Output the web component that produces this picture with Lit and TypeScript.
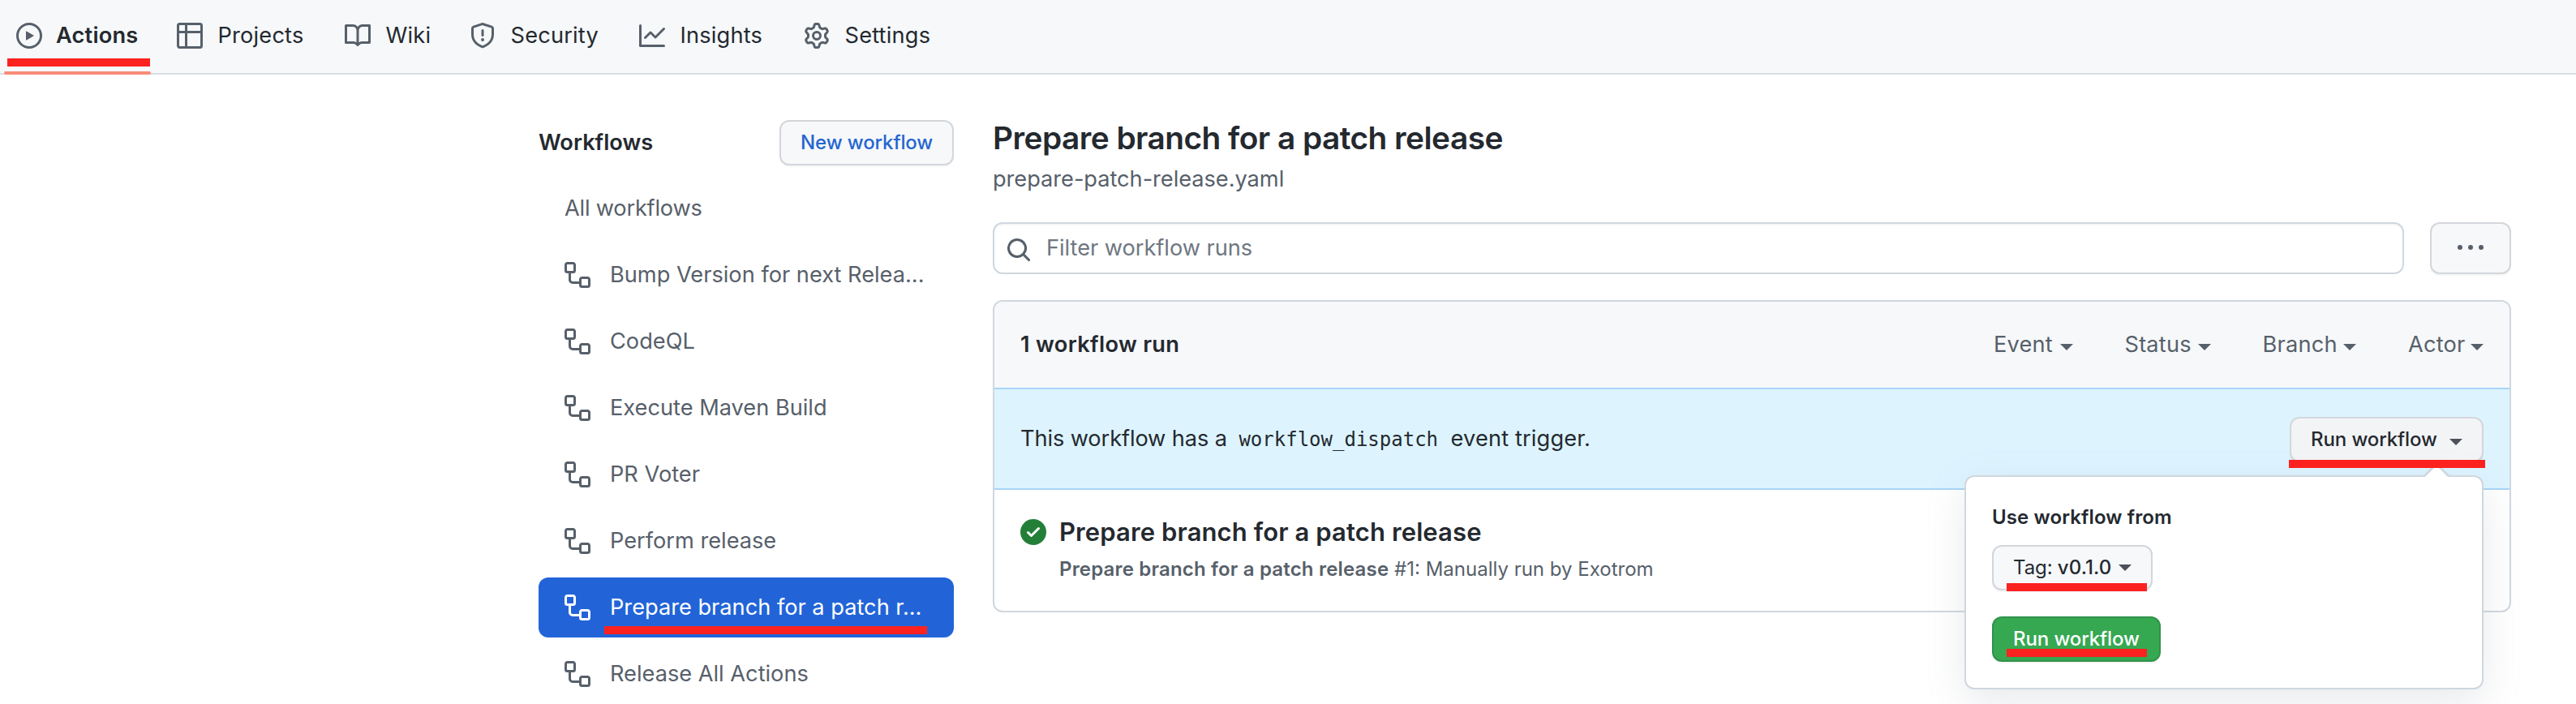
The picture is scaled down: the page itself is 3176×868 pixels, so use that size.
import { LitElement, html, css, nothing } from "lit";
import { customElement, property } from "lit/decorators.js";
import { classMap } from "lit/directives/class-map.js";
import { styleMap } from "lit/directives/style-map.js";

const ICONS: Record<string, string> = {
  play: "M1.5 8a6.5 6.5 0 1113 0 6.5 6.5 0 01-13 0zM8 0a8 8 0 100 16A8 8 0 008 0zM6.379 5.227A.25.25 0 006 5.442v5.117a.25.25 0 00.379.214l4.264-2.559a.25.25 0 000-.428L6.379 5.227z",
  table: "M1.75 0A1.75 1.75 0 000 1.75v12.5C0 15.216.784 16 1.75 16h12.5A1.75 1.75 0 0016 14.25V1.75A1.75 1.75 0 0014.25 0H1.75zM1.5 1.75a.25.25 0 01.25-.25H5V5H1.5V1.75zM6.5 1.5V5h8V1.75a.25.25 0 00-.25-.25H6.5zM14.5 6.5h-8v8h7.75a.25.25 0 00.25-.25V6.5zM5 14.5v-8H1.5v7.75c0 .138.112.25.25.25H5z",
  book: "M0 1.75A.75.75 0 01.75 1h4.253c1.227 0 2.317.59 3 1.501A3.744 3.744 0 0111.006 1h4.245a.75.75 0 01.75.75v10.5a.75.75 0 01-.75.75h-4.507a2.25 2.25 0 00-1.591.659l-.622.621a.75.75 0 01-1.06 0l-.622-.621A2.25 2.25 0 005.258 13H.75a.75.75 0 01-.75-.75V1.75zm8.755 3a2.25 2.25 0 012.25-2.25H14.5v9h-3.757c-.71 0-1.4.201-1.992.572l.004-7.322zm-1.504 7.324l.004-5.073-.002-2.253A2.25 2.25 0 005.003 2.5H1.5v9h3.757a3.75 3.75 0 011.994.574z",
  shield: "M7.467.133a1.75 1.75 0 011.066 0l5.25 1.68A1.75 1.75 0 0115 3.48V7c0 1.566-.32 3.182-1.303 4.682-.983 1.498-2.585 2.813-5.032 3.855a1.7 1.7 0 01-1.33 0c-2.447-1.042-4.049-2.357-5.032-3.855C1.32 10.182 1 8.566 1 7V3.48a1.755 1.755 0 011.217-1.667l5.25-1.68zm.61 1.429a.25.25 0 00-.153 0l-5.25 1.68a.25.25 0 00-.174.238V7c0 1.358.275 2.666 1.057 3.86.784 1.194 2.121 2.34 4.366 3.297a.2.2 0 00.154 0c2.245-.956 3.582-2.104 4.366-3.298C13.225 9.666 13.5 8.36 13.5 7V3.48a.251.251 0 00-.174-.237l-5.25-1.68zM8.75 4.75v3a.75.75 0 01-1.5 0v-3a.75.75 0 011.5 0zM9 10.5a1 1 0 11-2 0 1 1 0 012 0z",
  graph: "M1.5 1.75a.75.75 0 00-1.5 0v12.5c0 .414.336.75.75.75h14.5a.75.75 0 000-1.5H1.5V1.75zm14.28 2.53a.75.75 0 00-1.06-1.06L10 7.94 7.53 5.47a.75.75 0 00-1.06 0L3.22 8.72a.75.75 0 001.06 1.06L7 7.06l2.47 2.47a.75.75 0 001.06 0l5.25-5.25z",
  gear: "M7.429 1.525a6.593 6.593 0 011.142 0c.036.003.108.036.137.146l.289 1.105c.147.56.55.967.997 1.189.174.086.341.183.501.29.417.278.97.423 1.53.27l1.102-.303c.11-.03.175.016.195.046.219.31.41.641.573.989.014.031.022.11-.059.19l-.815.806c-.411.406-.562.957-.53 1.456a4.588 4.588 0 010 .582c-.032.499.119 1.05.53 1.456l.815.806c.08.08.073.159.059.19a6.494 6.494 0 01-.573.99c-.02.029-.086.074-.195.045l-1.103-.303c-.559-.153-1.112-.008-1.529.27-.16.107-.327.204-.5.29-.449.222-.851.628-.998 1.189l-.289 1.105c-.029.11-.101.143-.137.146a6.613 6.613 0 01-1.142 0c-.036-.003-.108-.037-.137-.146l-.289-1.105c-.147-.56-.55-.967-.997-1.189a4.502 4.502 0 01-.501-.29c-.417-.278-.97-.423-1.53-.27l-1.102.303c-.11.03-.175-.016-.195-.046a6.492 6.492 0 01-.573-.989c-.014-.031-.022-.11.059-.19l.815-.806c.411-.406.562-.957.53-1.456a4.587 4.587 0 010-.582c.032-.499-.119-1.05-.53-1.456l-.815-.806c-.08-.08-.073-.159-.059-.19a6.44 6.44 0 01.573-.99c.02-.029.086-.075.195-.045l1.103.303c.559.153 1.112.008 1.529-.27.16-.107.327-.204.5-.29.449-.222.851-.628.998-1.189l.289-1.105c.029-.11.101-.143.137-.146zM8 0c-.236 0-.47.01-.701.03-.743.065-1.29.615-1.458 1.261l-.29 1.106c-.017.066-.078.158-.211.224a5.994 5.994 0 00-.668.386c-.123.082-.233.09-.3.071L3.27 2.776c-.644-.177-1.392.02-1.82.63a7.977 7.977 0 00-.704 1.217c-.315.675-.111 1.422.363 1.891l.815.806c.05.048.098.147.088.294a6.084 6.084 0 000 .772c.01.147-.038.246-.088.294l-.815.806c-.474.469-.678 1.216-.363 1.891.2.428.436.835.704 1.218.428.609 1.176.806 1.82.63l1.103-.303c.066-.019.176-.011.299.071.213.143.436.272.668.386.133.066.194.158.212.224l.289 1.106c.169.646.715 1.196 1.458 1.26a8.094 8.094 0 001.402 0c.743-.064 1.29-.614 1.458-1.26l.29-1.106c.017-.066.078-.158.211-.224a5.98 5.98 0 00.668-.386c.123-.082.233-.09.3-.071l1.102.302c.644.177 1.392-.02 1.82-.63.268-.382.505-.789.704-1.217.315-.675.111-1.422-.364-1.891l-.814-.806c-.05-.048-.098-.147-.088-.294a6.1 6.1 0 000-.772c-.01-.147.039-.246.088-.294l.814-.806c.475-.469.679-1.216.364-1.891a7.992 7.992 0 00-.704-1.218c-.428-.609-1.176-.806-1.82-.63l-1.103.303c-.066.019-.176.011-.299-.071a5.991 5.991 0 00-.668-.386c-.133-.066-.194-.158-.212-.224L10.16 1.29C9.99.645 9.444.095 8.701.031A8.094 8.094 0 008 0zm1.5 8a1.5 1.5 0 11-3 0 1.5 1.5 0 013 0zM11 8a3 3 0 11-6 0 3 3 0 016 0z",
  workflow: "M0 1.75C0 .784.784 0 1.75 0h3.5C6.216 0 7 .784 7 1.75v3.5A1.75 1.75 0 015.25 7H4v4a1 1 0 001 1h4v-1.25C9 9.784 9.784 9 10.75 9h3.5c.966 0 1.75.784 1.75 1.75v3.5A1.75 1.75 0 0114.25 16h-3.5A1.75 1.75 0 019 14.25v-.75H5A2.5 2.5 0 012.5 11V7h-.75A1.75 1.75 0 010 5.25v-3.5zm1.75-.25a.25.25 0 00-.25.25v3.5c0 .138.112.25.25.25h3.5a.25.25 0 00.25-.25v-3.5a.25.25 0 00-.25-.25h-3.5zm9 9a.25.25 0 00-.25.25v3.5c0 .138.112.25.25.25h3.5a.25.25 0 00.25-.25v-3.5a.25.25 0 00-.25-.25h-3.5z",
  search: "M7 1a6 6 0 103.68 10.74l3.04 3.04a.75.75 0 101.06-1.06l-3.04-3.04A6 6 0 007 1zm0 1.5a4.5 4.5 0 110 9 4.5 4.5 0 010-9z",
  check: "M8 16A8 8 0 108 0a8 8 0 000 16zm3.78-9.72a.75.75 0 00-1.06-1.06L6.75 9.19 5.28 7.72a.75.75 0 00-1.06 1.06l2 2a.75.75 0 001.06 0l4.5-4.5z",
  kebab: "M8 9a1.5 1.5 0 100-3 1.5 1.5 0 000 3zM1.5 9a1.5 1.5 0 100-3 1.5 1.5 0 000 3zm13 0a1.5 1.5 0 100-3 1.5 1.5 0 000 3z",
};

@customElement("oct-icon")
class OctIcon extends LitElement {
  static styles = css`
    :host { display: block; flex: none; width: 32px; height: 32px; }
    svg { display: block; width: 32px; height: 32px; fill: currentColor; }
  `;
  @property() name = "";
  render() {
    return html`<svg viewBox="0 0 16 16"><path fill-rule="evenodd" d=${ICONS[this.name]}></path></svg>`;
  }
}

const TABS = [
  { icon: "play", label: "Actions", width: 101, selected: true },
  { icon: "table", label: "Projects", width: 108.5 },
  { icon: "book", label: "Wiki", width: 55.5 },
  { icon: "shield", label: "Security", width: 110.5 },
  { icon: "graph", label: "Insights", width: 104.5 },
  { icon: "gear", label: "Settings", width: 107 },
];

const WORKFLOWS = [
  { label: "Bump Version for next Relea..." },
  { label: "CodeQL" },
  { label: "Execute Maven Build" },
  { label: "PR Voter" },
  { label: "Perform release" },
  { label: "Prepare branch for a patch r...", selected: true },
  { label: "Release All Actions" },
];

const FILTERS = [
  { label: "Event", width: 81.5 },
  { label: "Status", width: 90 },
  { label: "Branch", width: 99.5 },
  { label: "Actor", width: 77 },
];

@customElement("app-root")
export class AppRoot extends LitElement {
  static styles = css`
    :host {
      display: block;
      height: 868px;
      overflow: hidden;
      background: #fff;
      color: #24292f;
      font-family: Inter, "Liberation Sans", sans-serif;
      font-size: 27.2px;
      line-height: 42px;
      white-space: nowrap;
    }
    * { box-sizing: border-box; }
    h1, h2, h3, p { margin: 0; font-weight: 600; }
    button { font: inherit; margin: 0; color: inherit; text-align: left; }

    .tabs {
      display: flex;
      gap: 16px;
      height: 92px;
      padding-left: 4px;
      background: #f6f8fa;
      border-bottom: 2px solid #d8dee6;
    }
    .tab {
      position: relative;
      display: flex;
      align-items: center;
      gap: 18.5px;
      height: 88px;
      padding: 0 16px;
    }
    .tab oct-icon { color: #57606a; }
    .tab-label { letter-spacing: 0.2px; }
    .tab.selected { font-weight: 600; gap: 17px; }
    .tab.selected::after {
      content: "";
      position: absolute;
      left: 1px;
      right: 0;
      top: 88px;
      height: 4px;
      border-radius: 2px;
      background: #f88c78;
    }

    .mark { position: absolute; height: 10px; background: #fc2220; }
    .mark-tab { left: 5px; right: 1px; top: 72px; }
    .mark-row { left: 81px; width: 398px; top: 60px; }
    .mark-run { left: -1px; right: -2px; top: 53px; }
    .mark-tag { left: 16px; width: 173px; top: 45px; }
    .mark-go { left: 16px; width: 173px; top: 38px; }

    .page { display: flex; gap: 48px; padding: 48px 80px 0 664px; }
    .side { flex: none; width: 512px; padding-top: 8px; }
    .side-head {
      display: flex;
      align-items: center;
      justify-content: space-between;
      height: 56px;
      margin-bottom: 16px;
    }
    .side-title { font-size: 27.2px; }
    .btn {
      position: relative;
      display: flex;
      align-items: center;
      height: 56px;
      padding: 0 24px;
      border: 2px solid #d3d6da;
      border-radius: 12px;
      background: #f6f8fa;
      box-shadow: 0 2px 0 rgba(27, 31, 36, 0.04);
      font-size: 24px;
      font-weight: 500;
      line-height: 40px;
      letter-spacing: -0.1px;
    }
    .btn-new { width: 215px; padding: 0 24px; color: #2465d0; }

    .row {
      position: relative;
      display: flex;
      align-items: center;
      gap: 24px;
      height: 74px;
      margin-bottom: 8px;
      padding: 0 32px;
      border-radius: 12px;
      color: #57606a;
    }
    .row.all { letter-spacing: -0.2px; }
    .row.selected { background: #2264d8; color: #fff; }

    .main { flex: 1; min-width: 0; }
    .title { font-size: 38.8px; line-height: 60px; letter-spacing: -0.53px; }
    .file { color: #57606a; font-weight: 400; letter-spacing: -0.03px; }
    .search-line { display: flex; gap: 32px; margin: 32px 0; }
    .search {
      flex: 1;
      display: flex;
      align-items: center;
      gap: 18px;
      height: 64px;
      padding-left: 14px;
      border: 2px solid #d0d7de;
      border-radius: 12px;
      color: #6e7781;
      box-shadow: inset 0 2px 0 rgba(208, 215, 222, 0.2);
      letter-spacing: -0.03px;
    }
    .search oct-icon { margin-top: 4px; color: #57606a; }
    .btn-more { width: 100px; height: 64px; padding: 0 32px; color: #57606a; }

    .runs { border: 2px solid #d0d7de; border-radius: 12px; height: 385px; }
    .runs-head {
      display: flex;
      align-items: center;
      justify-content: space-between;
      height: 106px;
      padding: 0 32px;
      border-radius: 10px 10px 0 0;
      background: #f6f8fa;
    }
    .count { font-size: 27.2px; letter-spacing: 0.34px; }
    .filters { display: flex; gap: 64px; color: #57606a; letter-spacing: 0.2px; }
    .filter { display: flex; align-items: center; }
    .caret {
      flex: none;
      width: 0;
      height: 0;
      margin-top: 5px;
      border: 8px solid transparent;
      border-top-color: currentColor;
      border-bottom-width: 0;
    }

    .banner {
      display: flex;
      align-items: center;
      justify-content: space-between;
      height: 126px;
      padding: 0 32px;
      border: solid #a8d5f8;
      border-width: 2px 0;
      background: #ddf4ff;
    }
    .banner-text { display: flex; align-items: baseline; letter-spacing: -0.1px; }
    .code {
      margin: 0 15.5px 0 14.5px;
      font-family: "DejaVu Sans Mono", monospace;
      font-size: 24px;
      letter-spacing: 0;
    }
    .trigger { letter-spacing: 0.15px; }
    .dispatch { position: relative; margin-top: 2px; }
    .btn-run { width: 239px; padding: 0 24px; justify-content: space-between; background: #f3f4f6; }
    .btn-run .caret, .btn-tag .caret { color: #4d5258; }

    .popover {
      position: absolute;
      top: 72px;
      right: 0;
      width: 640px;
      height: 264px;
      padding: 32px;
      border: 2px solid #d0d7de;
      border-radius: 12px;
      background: #fff;
      box-shadow: 0 16px 48px rgba(140, 149, 159, 0.2);
    }
    .popover::before, .popover::after {
      content: "";
      position: absolute;
      border: solid transparent;
      border-top-width: 0;
    }
    .popover::before {
      top: -18px;
      right: 40px;
      border-width: 0 16px 16px;
      border-bottom-color: #cfd8df;
    }
    .popover::after {
      top: -14px;
      right: 42px;
      border-width: 0 14px 14px;
      border-bottom-color: #fff;
    }
    .from { margin-bottom: 16px; font-size: 24px; line-height: 36px; letter-spacing: 0.13px; }
    .btn-tag { width: 198px; margin-bottom: 32px; }
    .tag-kind { width: 55px; font-weight: 400; }
    .tag-name { width: 75.5px; letter-spacing: 0.1px; }
    .btn-tag .caret { margin-top: 0; }
    .btn-go { width: 208px; border-color: #30924a; background: #36a852; color: #fff; }

    .run { display: flex; gap: 16px; padding: 32px 32px 0; }
    .run oct-icon { margin-top: 4px; color: #237f38; }
    .run-title { font-size: 31px; line-height: 40px; letter-spacing: 0.11px; }
    .run-info { padding-top: 8px; font-size: 24px; line-height: 36px; font-weight: 400; color: #57606a; }
    .run-name { font-weight: 600; letter-spacing: 0.18px; }
  `;

  render() {
    return html`
      <nav class="tabs">
        ${TABS.map((t) => html`
          <div class=${classMap({ tab: true, selected: !!t.selected })}>
            <oct-icon name=${t.icon}></oct-icon>
            <span class="tab-label" style=${styleMap({ width: `${t.width}px` })}>${t.label}</span>
            ${t.selected ? html`<i class="mark mark-tab"></i>` : nothing}
          </div>`)}
      </nav>
      <div class="page">
        <aside class="side">
          <div class="side-head">
            <h2 class="side-title">Workflows</h2>
            <button class="btn btn-new">New workflow</button>
          </div>
          <div class="row all">All workflows</div>
          ${WORKFLOWS.map((w) => html`
            <div class=${classMap({ row: true, selected: !!w.selected })}>
              <oct-icon name="workflow"></oct-icon>
              <span>${w.label}</span>
              ${w.selected ? html`<i class="mark mark-row"></i>` : nothing}
            </div>`)}
        </aside>
        <main class="main">
          <h1 class="title">Prepare branch for a patch release</h1>
          <p class="file">prepare-patch-release.yaml</p>
          <div class="search-line">
            <div class="search"><oct-icon name="search"></oct-icon><span>Filter workflow runs</span></div>
            <button class="btn btn-more"><oct-icon name="kebab"></oct-icon></button>
          </div>
          <section class="runs">
            <header class="runs-head">
              <h2 class="count">1 workflow run</h2>
              <div class="filters">
                ${FILTERS.map((f) => html`
                  <div class="filter">
                    <span style=${styleMap({ width: `${f.width}px` })}>${f.label}</span><i class="caret"></i>
                  </div>`)}
              </div>
            </header>
            <div class="banner">
              <div class="banner-text">
                <span>This workflow has a</span>
                <code class="code">workflow_dispatch</code>
                <span class="trigger">event trigger.</span>
              </div>
              <div class="dispatch">
                <button class="btn btn-run"><span>Run workflow</span><i class="caret"></i></button>
                <div class="popover">
                  <h3 class="from">Use workflow from</h3>
                  <button class="btn btn-tag">
                    <span class="tag-kind">Tag:</span><span class="tag-name">v0.1.0</span><i class="caret"></i>
                    <i class="mark mark-tag"></i>
                  </button>
                  <button class="btn btn-go">Run workflow<i class="mark mark-go"></i></button>
                </div>
                <i class="mark mark-run"></i>
              </div>
            </div>
            <div class="run">
              <oct-icon name="check"></oct-icon>
              <div>
                <h3 class="run-title">Prepare branch for a patch release</h3>
                <p class="run-info"><span class="run-name">Prepare branch for a patch release</span> #1: Manually run by Exotrom</p>
              </div>
            </div>
          </section>
        </main>
      </div>
    `;
  }
}
